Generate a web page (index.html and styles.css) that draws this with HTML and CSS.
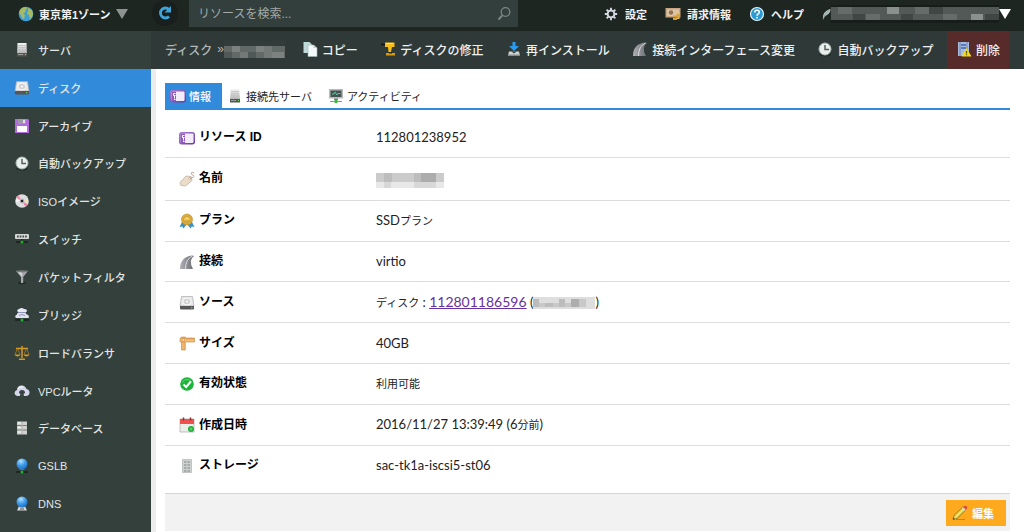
FILE: index.html
```
<!DOCTYPE html>
<html lang="ja">
<head>
    <meta charset="UTF-8">
    <meta name="viewport" content="width=device-width, initial-scale=1.0">
    <title>ディスク - コントロールパネル</title>
    <link rel="stylesheet" href="styles.css">
</head>
<body>
    <!-- icon set -->
    <svg class="sprite" aria-hidden="true">
        <defs>
            <linearGradient id="metal" x1="0" y1="0" x2="0" y2="1"><stop offset="0" stop-color="#f6f6f6"/><stop offset="1" stop-color="#b5b5b5"/></linearGradient>
            <linearGradient id="purple" x1="0" y1="0" x2="1" y2="1"><stop offset="0" stop-color="#a77bd0"/><stop offset="1" stop-color="#6d3a9c"/></linearGradient>
            <linearGradient id="roadgray" x1="0" y1="0" x2="1" y2="0"><stop offset="0" stop-color="#b0b0b6"/><stop offset="1" stop-color="#6a6a72"/></linearGradient>
            <radialGradient id="ball" cx=".4" cy=".25" r=".8"><stop offset="0" stop-color="#b4e2ff"/><stop offset=".5" stop-color="#3d9bea"/><stop offset="1" stop-color="#1a68c0"/></radialGradient>
        </defs>
        <symbol id="server" viewBox="0 0 16 16">
            <path d="M3.500 1h9l.4 10H3.100z" fill="url(#metal)"/>
            <path d="M4 3.500h8M4 5.500h8M4 7.500h8" stroke="#c4c4c0"/>
            <path d="M3 11h10v3.500H3z" fill="#555a50"/>
            <path d="M4 12.500h5" stroke="#999"/><rect x="11" y="12" width="1" height="1" fill="#7d6"/>
        </symbol>
        <symbol id="disk" viewBox="0 0 16 16">
            <path d="M2.500 1.500h11L15 11H1z" fill="#e8e8e8" stroke="#aaa" stroke-width=".7"/>
            <ellipse cx="8" cy="6.500" rx="4" ry="3.400" fill="#d2d2d2" stroke="#fafafa"/>
            <circle cx="8" cy="6.500" r="1" fill="#fff"/>
            <path d="M1 11h14v2.500q0 1-1 1H2q-1 0-1-1z" fill="#565656"/>
            <circle cx="12.800" cy="12.800" r=".7" fill="#6d6"/>
        </symbol>
        <symbol id="floppy" viewBox="0 0 16 16">
            <path d="M1 1h13l1 1v13H1z" fill="#b36be0"/>
            <path d="M4 1h8v5H4z" fill="#9b9aa5"/><path d="M9 2h2v3H9z" fill="#e5dff0"/>
            <path d="M3 8h10v6H3z" fill="#fff"/>
        </symbol>
        <symbol id="clock" viewBox="0 0 16 16">
            <ellipse cx="8" cy="14" rx="6" ry="1.500" fill="#222b28"/>
            <circle cx="8" cy="8" r="6" fill="#e9eeec" stroke="#aab7b3"/>
            <path d="M8 4v4.500h4" fill="none" stroke="#54615d" stroke-width="1.500"/>
        </symbol>
        <symbol id="disc" viewBox="0 0 16 16">
            <circle cx="8" cy="8" r="6.800" fill="#dedede"/>
            <path d="M8 8L2 4.500 4.500 2.200z" fill="#f38aac"/><path d="M8 8l6 3.500-2.500 2.400z" fill="#ef7fae"/>
            <path d="M8 8l6-1v3z" fill="#ece8a0"/><path d="M8 8L2 9V6z" fill="#f5f5f5"/>
            <circle cx="8" cy="8" r="2.400" fill="#bbb"/><circle cx="8" cy="8" r="1.300" fill="#222"/>
        </symbol>
        <symbol id="switch" viewBox="0 0 16 16">
            <rect x="1" y="3" width="14" height="5" rx="1" fill="#d4d6d5"/>
            <path d="M3 5.500h10" stroke="#49504d" stroke-width="2" stroke-dasharray="1.700 1"/>
            <path d="M2 11h12M8 8v3" stroke="#18201d" stroke-width="1.500"/><circle cx="8" cy="11" r="1.500" fill="#19b529"/>
        </symbol>
        <symbol id="filter" viewBox="0 0 16 16">
            <ellipse cx="8" cy="14" rx="4" ry="1.200" fill="#222b28"/>
            <path d="M2 2h12L9.200 8v6H7V8z" fill="#a8a8ae"/><path d="M4 2.500h4L8 13V8z" fill="#d8d8dc"/>
            <ellipse cx="8" cy="2.300" rx="6" ry="1.100" fill="#77777f"/>
        </symbol>
        <symbol id="bridge" viewBox="0 0 16 16">
            <path d="M1 13h14" stroke="#18201d" stroke-width="1.500"/>
            <path d="M4 5q-2-2 1-3 3-2 5 0 4 0 2.500 3z" fill="#e6e7f5"/>
            <path d="M2 11q-2-2 1-3.500 0-2.500 4-2.500h3q2 0 2 2 4 1 2.500 4z" fill="#e0e1f2"/>
            <path d="M4 5.500h8M5 8.500q3-2 6 0" fill="none" stroke="#8f93b5"/>
            <circle cx="8" cy="13" r="1.500" fill="#17b82b"/>
        </symbol>
        <symbol id="scales" viewBox="0 0 16 16">
            <path d="M8 1v12M2 3.500h12M5 14.200h6" stroke="#d79a23" stroke-width="1.500" fill="none"/>
            <path d="M3.500 3.500l-2.500 6M3.500 3.500l2.500 6M12.500 3.500l-2.500 6M12.500 3.500l2.500 6" stroke="#b98a31" stroke-width=".7"/>
            <path d="M.5 9.500h6q-1 2-3 2t-3-2M9.500 9.500h6q-1 2-3 2t-3-2" fill="#d79a23"/>
        </symbol>
        <symbol id="cloud" viewBox="0 0 16 16">
            <path d="M3 13q-2.500-1-2.500-3T3 7q0-4 4-4.500 4-.500 5.500 3.500 3 .500 3 3.500t-3 3.500z" fill="#d5d6eb"/>
            <path d="M5 10q0-3 3-3t3 3l-1.500 1q1 1 0 2.500H6.500Q5 12 6.500 11z" fill="#38443f"/>
            <path d="M4 6q2-3 5-2" stroke="#fff" fill="none"/>
        </symbol>
        <symbol id="database" viewBox="0 0 16 16">
            <path d="M3 1.500h10v13H3z" fill="#cfd1cf"/>
            <path d="M3 5.500h10M3 10h10" stroke="#7d827f"/><path d="M8 2v12" stroke="#b3b7b5"/>
            <path d="M4 3h3M4 7.500h3M4 12h3" stroke="#fafafa"/>
        </symbol>
        <symbol id="gslb" viewBox="0 0 16 16">
            <path d="M2 14h12" stroke="#18201d" stroke-width="1.500"/>
            <path d="M5 10h6l-1 2H6z" fill="#6f7c83"/><circle cx="8" cy="6" r="5.500" fill="url(#ball)"/>
            <circle cx="8" cy="14" r="1.500" fill="#17b82b"/>
        </symbol>
        <symbol id="dns" viewBox="0 0 16 16">
            <path d="M5 10h6l2 4.500H3z" fill="#d6d6d6"/><circle cx="8" cy="6" r="5.500" fill="url(#ball)"/>
            <path d="M6 13h4" stroke="#555"/>
        </symbol>
        <symbol id="globe" viewBox="0 0 16 16">
            <circle cx="8" cy="8" r="7.300" fill="#3d9fd6"/>
            <path d="M2 4q2-3 6-3l1 2-2 1 1 2-3 1 2 2-1 4-2-1-1-3-2-2zM10 2l4 2 1 4-1 3-2 2-1-4-2-1 1-3z" fill="#a9bb62"/>
        </symbol>
        <symbol id="refresh" viewBox="0 0 16 16">
            <path d="M12 11.500a5 5 0 1 1 0-7" fill="none" stroke="#3ea5dc" stroke-width="2.800"/>
            <path d="M14 1v6.500H7.500z" fill="#3ea5dc"/>
        </symbol>
        <symbol id="search" viewBox="0 0 16 16">
            <circle cx="9.500" cy="6" r="4.300" fill="none" stroke="#7d8683" stroke-width="1.300"/>
            <path d="M6.300 9.300L2.500 13.500" stroke="#7d8683" stroke-width="2"/>
        </symbol>
        <symbol id="gear" viewBox="0 0 16 16">
            <path d="M8 1.800v12.400M1.800 8h12.400M3.600 3.600l8.800 8.800M12.400 3.600l-8.800 8.800" stroke="#d4d6e0" stroke-width="1.900"/>
            <circle cx="8" cy="8" r="3.400" fill="#1e2622" stroke="#d4d6e0" stroke-width="2"/>
        </symbol>
        <symbol id="bill" viewBox="0 0 16 16">
            <rect x=".5" y="2" width="15" height="9.500" fill="#c7a681"/><rect x="2" y="3.500" width="12" height="6.500" fill="#dcc5aa"/>
            <circle cx="6" cy="6.500" r="2.200" fill="#967250"/>
            <path d="M8 9.500h4v4.500H8z" fill="#d99f31"/><path d="M11.500 6.500h3V13h-3z" fill="#eec05b"/><path d="M8 11.500h4M11.500 9h3M11.500 11h3" stroke="#9b6d1e" stroke-width=".7"/>
        </symbol>
        <symbol id="help" viewBox="0 0 16 16">
            <circle cx="8" cy="8" r="6.500" fill="#2b9bd6" stroke="#e3f3fb" stroke-width="1.200"/>
            <path d="M5.700 6.500q0-2.200 2.300-2.200t2.300 2q0 1-1.200 1.700Q8 8.600 8 9.700" fill="none" stroke="#fff" stroke-width="1.500"/><circle cx="8" cy="11.700" r=".9" fill="#fff"/>
        </symbol>
        <symbol id="feather" viewBox="0 0 10 16">
            <path d="M1 14Q0 5 9.500 2 10 7 5 9.500 2.500 10.500 1.500 14z" fill="#b4c5c2"/><path d="M1 14Q3 7 8.500 3" fill="none" stroke="#69807c" stroke-width=".7"/>
        </symbol>
        <symbol id="copy" viewBox="0 0 16 16">
            <path d="M1.500 1h6L10 3.500V12H1.500z" fill="#bfd9d8"/>
            <path d="M6 4h5.500L15 7v8.500H6z" fill="#f3fafa" stroke="#9ab5b3" stroke-width=".6"/><path d="M11.500 4v3H15" fill="#bdd2d0"/>
        </symbol>
        <symbol id="drill" viewBox="0 0 16 16">
            <path d="M1 3.500h4" stroke="#111" stroke-width="1.500"/><path d="M5 1.500h9.500v4.500H12l-1 5H8.500L8 6H5z" fill="#f6bd19"/>
            <path d="M6 2.500h7" stroke="#ffe27a"/><path d="M6 12h9v2.500H6z" fill="#d99a0a"/><path d="M9 12h3" stroke="#222"/>
        </symbol>
        <symbol id="reinstall" viewBox="0 0 16 16">
            <path d="M6.500 1h3v4H13L8 10 3 5h3.500z" fill="#2b9af0"/><path d="M3 10.500h10l1 4H2z" fill="#cfd3d2"/>
            <path d="M5.500 10.500h5L8 12.500z" fill="#2f3a38"/><path d="M2 14h12" stroke="#8c9391"/>
        </symbol>
        <symbol id="road" viewBox="0 0 16 16">
            <path d="M1 15q0-12 12-13.500l2 .5Q9 6 14 15z" fill="url(#roadgray)"/>
            <path d="M6.500 15Q6.500 5 13.500 2" fill="none" stroke="#dcdce0" stroke-width="1"/>
        </symbol>
        <symbol id="trash" viewBox="0 0 16 16">
            <path d="M2 1h11v14H2z" fill="#a9bbdc"/><path d="M4 1v14M11 1v14" stroke="#6e83ac"/><path d="M5 4h5M5 7h5" stroke="#3f66bd" stroke-width="1.500"/>
            <path d="M10.500 7l5 8.500h-10z" fill="#f0dc18"/><path d="M10.500 10v2.500M10.500 13.300v1" stroke="#554c00" stroke-width="1.200"/>
        </symbol>
        <symbol id="id" viewBox="0 0 16 16">
            <rect x=".7" y="2.700" width="14.600" height="11" rx="2" fill="#f3edf8" stroke="url(#purple)" stroke-width="1.500"/>
            <path d="M1.500 3.500H6V13H1.500z" fill="#8f5cbd"/>
            <path d="M5.500 5.500H3.500v2h2M4.500 7.500v3M4 11.500h1.500" fill="none" stroke="#fff"/>
        </symbol>
        <symbol id="monitor" viewBox="0 0 16 16">
            <rect x="1" y="1" width="14" height="9.500" fill="#b9bcbb"/><rect x="2.500" y="2.500" width="11" height="6.500" fill="#46524f"/>
            <path d="M4 6h2l1-2 2 3 1-1.500h2.500" fill="none" stroke="#54c6a1"/><path d="M6 10.500h4V12H6z" fill="#777"/>
            <path d="M2 13.500h12" stroke="#8c9390"/><circle cx="8" cy="13.500" r="1.800" fill="#32bd37"/>
        </symbol>
        <symbol id="tag" viewBox="0 0 16 16">
            <path d="M1 11.500L7 5l5 .5 1 4-6.500 5.500-4.500-.5z" fill="#ecdccb" stroke="#bba995" stroke-width=".7"/>
            <circle cx="10.700" cy="7.500" r="1" fill="#fff" stroke="#a58f7b" stroke-width=".5"/>
            <path d="M10.700 7q5 0 4-2.500-2.500-.500-2.500-2.500 1-1.500 3 0" fill="none" stroke="#b69c88" stroke-width=".9"/>
        </symbol>
        <symbol id="medal" viewBox="0 0 16 16">
            <path d="M3 9L.5 14l2.700-.4L4.500 15.500 8 11zM13 9l2.500 5-2.700-.4-1.300 1.900L8 11z" fill="#3792cc"/>
            <circle cx="8" cy="6.500" r="5.500" fill="#dfae31" stroke="#b98827" stroke-width=".6"/><circle cx="8" cy="6.500" r="3.300" fill="#f1cd62" stroke="#b98e31" stroke-width=".7"/>
            <path d="M6 8h4" stroke="#b28529"/>
        </symbol>
        <symbol id="ruler" viewBox="0 0 16 16">
            <path d="M2.500 2h3.800v13H2.500z" fill="#f0b56c" stroke="#c18339" stroke-width=".6"/><path d="M1 3h14.500v4H1z" fill="#f6be79" stroke="#c18339" stroke-width=".6"/>
            <circle cx="4.400" cy="5" r="1.300" fill="#fbe0b8" stroke="#c18339" stroke-width=".5"/>
            <path d="M8 3v1.500M10 3v1.500M12 3v1.500M14 3v1.500" stroke="#ba7b31" stroke-width=".6"/>
        </symbol>
        <symbol id="check" viewBox="0 0 16 16">
            <circle cx="8" cy="8" r="6.800" fill="#1eb33a"/><path d="M3 6q5-5 10 0" fill="none" stroke="#5dd370"/>
            <path d="M4.500 8.500L7.200 11 11.800 5.500" fill="none" stroke="#fff" stroke-width="2"/>
        </symbol>
        <symbol id="calendar" viewBox="0 0 16 16">
            <path d="M1 2h14v13H1z" fill="#eceeec" stroke="#a8aaa8" stroke-width=".7"/><path d="M1 2h14v5H1z" fill="#f0514d"/>
            <path d="M4.500.500v3M11.500.500v3" stroke="#952d2a" stroke-width="1.500"/>
            <circle cx="12" cy="12" r="3" fill="#23af38"/><path d="M12 10.500v3M10.500 12h3" stroke="#92e099" stroke-width=".7"/>
        </symbol>
        <symbol id="storage" viewBox="0 0 16 16">
            <path d="M3.500 1.500h9v13h-9z" fill="#ced1d0" stroke="#a7abaa" stroke-width=".6"/><path d="M5 4h6M5 7h6M5 10h6M5 13h6" stroke="#7b8583" stroke-dasharray="2.500 1"/>
        </symbol>
        <symbol id="pencil" viewBox="0 0 16 16">
            <path d="M4 14.500h9" stroke="#c98416"/>
            <path d="M1 14.500l1-4L11 1.800l3 3L5 13.500z" fill="#e9d044" stroke="#6d6a1c" stroke-width=".7"/><path d="M3.500 12L12.500 3.300" stroke="#fff3a0"/>
            <path d="M11 1.800q2-2 3.600-.5t-.6 3.500z" fill="#e64a3d"/><path d="M10.300 2.500l3 3" stroke="#cfd6d8" stroke-width="1.200"/><path d="M1 14.500l.5-1.800 1.400 1.300z" fill="#333"/>
        </symbol>
    </svg>

    <header class="topbar">
        <button class="zone"><svg class="icon"><use href="#globe"/></svg>東京第1ゾーン<span class="arrow"></span></button>
        <button class="refresh" aria-label="更新"><svg class="icon"><use href="#refresh"/></svg></button>
        <form class="search">
            <input type="text" aria-label="リソースを検索" placeholder="リソースを検索...">
            <svg class="icon"><use href="#search"/></svg>
        </form>
        <nav class="account">
            <a href="#"><svg class="icon"><use href="#gear"/></svg>設定</a>
            <a href="#"><svg class="icon"><use href="#bill"/></svg>請求情報</a>
            <a href="#"><svg class="icon"><use href="#help"/></svg>ヘルプ</a>
            <button class="user" aria-label="アカウント">
                <svg class="feather"><use href="#feather"/></svg>
                <svg class="mask-user" viewBox="0 0 168 18">
                    <path d="M0 0h168v18H0z" fill="#171d1b"/>
                    <path d="M0 2h168v13H0z" fill="#525957"/>
                    <path d="M7 2h14v7H7zM35 9h14v6H35zM84 2h14v7H84zM112 9h14v6h-14z" fill="#666c6a"/>
                    <path d="M56 2h12v7H56zM140 9h12v6h-12z" fill="#8b908e"/>
                    <path d="M22 9h12v6H22zM70 9h12v6H70zM98 2h14v7H98zM154 9h14v6h-14z" fill="#3f4644"/>
                </svg>
                <span class="arrow"></span>
            </button>
        </nav>
    </header>

    <div class="layout">
        <nav class="sidebar">
            <ul>
                <li><a href="#"><svg class="icon"><use href="#server"/></svg>サーバ</a></li>
                <li class="active"><a href="#"><svg class="icon"><use href="#disk"/></svg>ディスク</a></li>
                <li><a href="#"><svg class="icon"><use href="#floppy"/></svg>アーカイブ</a></li>
                <li><a href="#"><svg class="icon"><use href="#clock"/></svg>自動バックアップ</a></li>
                <li><a href="#"><svg class="icon"><use href="#disc"/></svg>ISOイメージ</a></li>
                <li><a href="#"><svg class="icon"><use href="#switch"/></svg>スイッチ</a></li>
                <li><a href="#"><svg class="icon"><use href="#filter"/></svg>パケットフィルタ</a></li>
                <li><a href="#"><svg class="icon"><use href="#bridge"/></svg>ブリッジ</a></li>
                <li><a href="#"><svg class="icon"><use href="#scales"/></svg>ロードバランサ</a></li>
                <li><a href="#"><svg class="icon"><use href="#cloud"/></svg>VPCルータ</a></li>
                <li><a href="#"><svg class="icon"><use href="#database"/></svg>データベース</a></li>
                <li><a href="#"><svg class="icon"><use href="#gslb"/></svg>GSLB</a></li>
                <li><a href="#"><svg class="icon"><use href="#dns"/></svg>DNS</a></li>
            </ul>
        </nav>

        <main>
            <div class="toolbar">
                <div class="breadcrumb">
                    <a href="#">ディスク</a><span>»</span>
                    <svg class="mask-crumb" viewBox="0 0 61 17">
                        <path d="M0 0h61v17H0z" fill="#323c3a"/>
                        <path d="M0 5h61v12H0z" fill="#626a68"/>
                        <path d="M8 5h8v6H8zM32 5h8v6h-8zM48 11h12v6H48z" fill="#7b8280"/>
                        <path d="M16 11h8v6h-8zM40 5h8v12h-8z" fill="#737977"/>
                        <path d="M0 11h8v6H0zM24 11h8v6h-8z" fill="#505957"/>
                    </svg>
                </div>
                <div class="actions">
                    <button><svg class="icon"><use href="#copy"/></svg>コピー</button>
                    <button><svg class="icon"><use href="#drill"/></svg>ディスクの修正</button>
                    <button><svg class="icon"><use href="#reinstall"/></svg>再インストール</button>
                    <button><svg class="icon"><use href="#road"/></svg>接続インターフェース変更</button>
                    <button><svg class="icon"><use href="#clock"/></svg>自動バックアップ</button>
                    <button class="delete"><svg class="icon"><use href="#trash"/></svg>削除</button>
                </div>
            </div>

            <div class="content">
                <nav class="tabs">
                    <a href="#" class="active"><svg class="icon"><use href="#id"/></svg>情報</a>
                    <a href="#"><svg class="icon"><use href="#server"/></svg>接続先サーバ</a>
                    <a href="#"><svg class="icon"><use href="#monitor"/></svg>アクティビティ</a>
                </nav>

                <table class="info">
                    <tr>
                        <th scope="row"><svg class="icon"><use href="#id"/></svg>リソース ID</th>
                        <td>112801238952</td>
                    </tr>
                    <tr>
                        <th scope="row"><svg class="icon"><use href="#tag"/></svg>名前</th>
                        <td>
                            <svg class="mask-name" viewBox="0 0 68 16">
                                <path d="M0 1h68v9H0z" fill="#cbcbcb"/>
                                <path d="M0 10h68v6H0z" fill="#e8e8e8"/>
                                <path d="M8 1h8v9H8zM38 1h7v9h-7z" fill="#bdbdbd"/>
                                <path d="M45 1h15v9H45z" fill="#acacac"/>
                                <path d="M8 10h7v6H8zM38 10h22v6H38z" fill="#d8d8d8"/>
                            </svg>
                        </td>
                    </tr>
                    <tr>
                        <th scope="row"><svg class="icon"><use href="#medal"/></svg>プラン</th>
                        <td>SSD<span class="ja">プラン</span></td>
                    </tr>
                    <tr>
                        <th scope="row"><svg class="icon"><use href="#road"/></svg>接続</th>
                        <td>virtio</td>
                    </tr>
                    <tr>
                        <th scope="row"><svg class="icon"><use href="#disk"/></svg>ソース</th>
                        <td>
                            <span class="ja">ディスク</span> : <a href="#">112801186596</a>
                            (<svg class="mask-source" viewBox="0 0 62 14">
                                <path d="M0 1h62v12H0z" fill="#dedede"/>
                                <path d="M0 3h6v8H0zM12 7h8v4h-8zM26 3h6v8h-6z" fill="#bcbcbc"/>
                                <path d="M6 7h6v4H6zM20 7h6v4h-6zM32 7h6v4h-6zM46 3h7v8h-7z" fill="#c8c8c8"/>
                                <path d="M38 3h8v8h-8z" fill="#adadad"/>
                            </svg>)
                        </td>
                    </tr>
                    <tr>
                        <th scope="row"><svg class="icon"><use href="#ruler"/></svg>サイズ</th>
                        <td>40GB</td>
                    </tr>
                    <tr>
                        <th scope="row"><svg class="icon"><use href="#check"/></svg>有効状態</th>
                        <td><span class="ja">利用可能</span></td>
                    </tr>
                    <tr>
                        <th scope="row"><svg class="icon"><use href="#calendar"/></svg>作成日時</th>
                        <td>2016/11/27 13:39:49 (6<span class="ja">分前</span>)</td>
                    </tr>
                    <tr>
                        <th scope="row"><svg class="icon"><use href="#storage"/></svg>ストレージ</th>
                        <td>sac-tk1a-iscsi5-st06</td>
                    </tr>
                </table>

                <div class="form-footer">
                    <button class="edit"><svg class="icon"><use href="#pencil"/></svg>編集</button>
                </div>
            </div>
        </main>
    </div>
</body>
</html>
```

FILE: styles.css
```
* {
    box-sizing: border-box;
}

body {
    margin: 0;
    min-height: 100vh;
    display: flex;
    flex-direction: column;
    font-family: "Liberation Sans", "Noto Sans CJK JP", sans-serif;
    font-size: 12px;
    color: #222;
    background: #fff;
}

a {
    color: inherit;
    text-decoration: none;
}

button {
    display: flex;
    align-items: center;
    padding: 0;
    border: none;
    background: none;
    color: inherit;
    font: inherit;
    white-space: nowrap;
    cursor: pointer;
}

ul {
    list-style: none;
    margin: 0;
    padding: 0;
}

.sprite {
    position: absolute;
    width: 0;
    height: 0;
}

.icon {
    width: 16px;
    height: 16px;
    flex: none;
}

.arrow {
    border: 6px solid transparent;
    border-top: 10px solid #fff;
    border-bottom: 0;
}

/* top bar */
.topbar {
    display: flex;
    height: 31px;
    padding: 0 13px 4px 18px;
    background: #1e2622;
    color: #f2f2f2;
    font-size: 11px;
    font-weight: bold;
}

.zone {
    width: 134px;
    gap: 5px;
}

.zone .arrow {
    border-top-color: #8d9391;
}

.refresh {
    justify-content: center;
    width: 26px;
    height: 26px;
    border-radius: 50%;
    background: #191f1c;
}

.search {
    position: relative;
    flex: 0 1 329px;
    margin-left: 11px;
}

.search input {
    width: 100%;
    height: 27px;
    padding: 0 30px 0 9px;
    border: none;
    background: #333f3c;
    color: #ddd;
    font: 12px "Liberation Sans", "Noto Sans CJK JP", sans-serif;
}

.search input::placeholder {
    color: #a3aaa8;
}

.search .icon {
    position: absolute;
    right: 6px;
    top: 6px;
}

.account {
    display: flex;
    align-items: center;
    gap: 18px;
    margin-left: auto;
    white-space: nowrap;
}

.account a {
    display: flex;
    align-items: center;
    gap: 6px;
}

.feather {
    width: 9px;
    height: 14px;
}

.mask-user {
    width: 168px;
    height: 18px;
}

/* side menu */
.layout {
    display: flex;
    flex: 1;
}

.sidebar {
    flex: 0 0 151px;
    background: #33403b;
    color: #e4e6e5;
    font-size: 11px;
    font-weight: 500;
}

.sidebar ul {
    display: flex;
    flex-direction: column;
    height: calc(100vh - 40px);
    min-height: 400px;
}

.sidebar li {
    flex: 0 1 38px;
}

.sidebar a {
    display: flex;
    align-items: center;
    gap: 8px;
    height: 100%;
    padding-left: 14px;
}

.sidebar .active {
    background: #328bda;
}

/* main */
main {
    flex: 1;
    min-width: 0;
}

.toolbar {
    display: flex;
    justify-content: space-between;
    height: 38px;
    padding: 0 15px 0 14px;
    background: #2f3a38;
    color: #f0f0f0;
    font-weight: 500;
}

.breadcrumb {
    display: flex;
    align-items: center;
    padding-bottom: 2px;
    color: #b3b8b6;
}

.breadcrumb span {
    margin-left: 5px;
}

.mask-crumb {
    width: 61px;
    height: 17px;
}

.actions {
    display: flex;
    flex: 1;
    justify-content: space-between;
    margin-left: 8px;
}

.actions button {
    gap: 4px;
    padding: 0 9px 2px;
}

.actions .delete {
    background: #562b2a;
}

.content {
    padding: 14px 14px 1px 9px;
    border-left: 5px solid #ececec;
}

.tabs {
    display: flex;
    border-bottom: 2px solid #328bda;
    font-size: 11px;
}

.tabs a {
    display: flex;
    align-items: center;
    gap: 3px;
    height: 25px;
    padding: 0 11px 0 5px;
}

.tabs .active {
    background: #328bda;
    color: #fff;
    font-weight: 500;
}

.info {
    width: 100%;
    height: 367px;
    margin: 8px 0;
    border-collapse: collapse;
    line-height: 16px;
}

.info tr + tr {
    border-top: 1px solid #ddd;
}

.info th {
    width: 211px;
    padding: 0 0 0 14px;
    color: #000;
    text-align: left;
}

.info th .icon {
    margin-right: 4px;
}

.info td {
    padding: 0;
    font-family: Lato, "Noto Sans CJK JP", sans-serif;
    font-size: 13px;
}

.info td a {
    color: #6a2fa0;
    font-size: 14px;
    text-decoration: underline;
}

.info .ja {
    font-size: 11px;
}

.info svg {
    vertical-align: middle;
}

.mask-name {
    width: 68px;
    height: 16px;
}

.mask-source {
    width: 62px;
    height: 14px;
}

.form-footer {
    display: flex;
    justify-content: flex-end;
    padding: 6px 4px 5px;
    border-top: 1px solid #d6d6d6;
    background: #f2f2f2;
}

.edit {
    gap: 4px;
    height: 26px;
    padding: 0 12px 0 6px;
    background: #ffa91f;
    color: #fff;
    font-size: 11px;
    font-weight: bold;
}
```
